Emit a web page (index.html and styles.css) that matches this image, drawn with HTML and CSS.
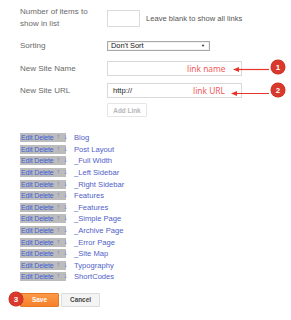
FILE: index.html
```html
<!DOCTYPE html>
<html>
<head>
<meta charset="utf-8">
<link rel="stylesheet" href="styles.css">
</head>
<body>
<div class="page">
  <div class="row r-num">
    <div class="label">Number of items to<br>show in list</div>
    <div class="field">
      <input class="num" type="text">
      <span class="hint">Leave blank to show all links</span>
    </div>
  </div>
  <div class="row r-sort">
    <div class="label">Sorting</div>
    <div class="field">
      <div class="select"><span>Don't Sort</span><span class="caret">&#9660;</span></div>
    </div>
  </div>
  <div class="row r-name">
    <div class="label">New Site Name</div>
    <div class="field"><div class="text-input"></div></div>
  </div>
  <div class="row r-url">
    <div class="label">New Site URL</div>
    <div class="field"><div class="text-input">http://</div></div>
  </div>
  <div class="row r-add">
    <div></div>
    <div class="field"><button class="add">Add Link</button></div>
  </div>

  <ul class="links">
    <li><span class="ctl">Edit Delete<i>↑</i><i>↓</i></span><span class="name">Blog</span></li>
    <li><span class="ctl">Edit Delete<i>↑</i><i>↓</i></span><span class="name">Post Layout</span></li>
    <li><span class="ctl">Edit Delete<i>↑</i><i>↓</i></span><span class="name">_Full Width</span></li>
    <li><span class="ctl">Edit Delete<i>↑</i><i>↓</i></span><span class="name">_Left Sidebar</span></li>
    <li><span class="ctl">Edit Delete<i>↑</i><i>↓</i></span><span class="name">_Right Sidebar</span></li>
    <li><span class="ctl">Edit Delete<i>↑</i><i>↓</i></span><span class="name">Features</span></li>
    <li><span class="ctl">Edit Delete<i>↑</i><i>↓</i></span><span class="name">_Features</span></li>
    <li><span class="ctl">Edit Delete<i>↑</i><i>↓</i></span><span class="name">_Simple Page</span></li>
    <li><span class="ctl">Edit Delete<i>↑</i><i>↓</i></span><span class="name">_Archive Page</span></li>
    <li><span class="ctl">Edit Delete<i>↑</i><i>↓</i></span><span class="name">_Error Page</span></li>
    <li><span class="ctl">Edit Delete<i>↑</i><i>↓</i></span><span class="name">_Site Map</span></li>
    <li><span class="ctl">Edit Delete<i>↑</i><i>↓</i></span><span class="name">Typography</span></li>
    <li><span class="ctl">Edit Delete<i>↑</i><i>↓</i></span><span class="name">ShortCodes</span></li>
  </ul>

  <div class="actions">
    <button class="save">Save</button>
    <button class="cancel">Cancel</button>
  </div>

  <span class="note note-name">link name</span>
  <span class="note note-url">link URL</span>
  <svg class="arrows" width="291" height="320" viewBox="0 0 291 320">
    <g stroke="#e8352b" stroke-width="1.2" fill="#e8352b">
      <line x1="237" y1="69.5" x2="269" y2="69.5"/>
      <polygon points="233,69.5 239,67 239,72" stroke="none"/>
      <line x1="235" y1="93.5" x2="269" y2="93.5"/>
      <polygon points="231,93.5 237,91 237,96" stroke="none"/>
    </g>
  </svg>
  <span class="badge b1">1</span>
  <span class="badge b2">2</span>
  <span class="badge b3">3</span>
</div>
</body>
</html>
```

FILE: styles.css
```css
html, body {
  margin: 0;
  padding: 0;
  background: #fff;
}
body {
  font-family: "Liberation Sans", Arial, sans-serif;
  font-size: 8px;
  color: #666;
}
.page {
  position: relative;
  width: 291px;
  height: 320px;
  padding-left: 20px;
  box-sizing: border-box;
}
.row {
  display: grid;
  grid-template-columns: 87px 1fr;
  align-items: center;
}
.label {
  line-height: 12px;
  color: #6a6a6a;
}
.field {
  display: flex;
  align-items: center;
}
.r-num {
  padding-top: 6px;
  align-items: start;
}
.r-num .field { padding-top: 4px; }
.num {
  width: 33px;
  height: 17px;
  box-sizing: border-box;
  border: 1px solid #dcdcdc;
  margin: 0;
  padding: 0;
  outline: none;
}
.hint {
  margin-left: 6px;
  font-size: 7.6px;
  color: #555;
}
.r-sort { margin-top: 10px; height: 12px; }
.select {
  width: 103px;
  height: 10px;
  box-sizing: border-box;
  border: 1px solid #a8a8a8;
  display: flex;
  align-items: center;
  justify-content: space-between;
  padding: 0 4px 0 3px;
  color: #111;
  font-size: 7.4px;
  line-height: 8px;
  box-shadow: inset 0 0 0 1px #f2f2f2;
}
.caret { font-size: 4px; color: #111; }
.r-name { margin-top: 9px; }
.r-url { margin-top: 7px; }
.text-input {
  width: 135px;
  height: 15px;
  box-sizing: border-box;
  border: 1px solid #d9d9d9;
  padding-left: 5px;
  display: flex;
  align-items: center;
  color: #222;
  font-size: 7.6px;
}
.r-add { margin-top: 5px; }
.add {
  width: 40px;
  height: 14px;
  border: 1px solid #e6e6e6;
  background: #fff;
  color: #b5b5b5;
  font-family: inherit;
  font-size: 6.4px;
  font-weight: bold;
  padding: 0;
  border-radius: 1px;
}
.links {
  list-style: none;
  margin: 15px 0 0;
  padding: 0;
}
.links li {
  height: 11.6px;
  display: flex;
  align-items: center;
}
.ctl {
  width: 46px;
  height: 9px;
  background: #bcbcbc;
  color: #3f5fd6;
  font-size: 7px;
  line-height: 9px;
  padding-left: 1px;
  box-sizing: border-box;
  white-space: nowrap;
  letter-spacing: -0.15px;
  display: flex;
  align-items: center;
}
.ctl i {
  font-style: normal;
  font-family: "DejaVu Sans", sans-serif;
  color: #7d8cc8;
  font-size: 5.5px;
  letter-spacing: 0;
  margin-left: 2.5px;
}
.name {
  margin-left: 8px;
  color: #5060c8;
  font-size: 7.6px;
}
.actions {
  margin-top: 10px;
  display: flex;
  gap: 2px;
}
.actions button {
  height: 14px;
  width: 39px;
  padding: 0;
  font-family: inherit;
  font-size: 6.4px;
  font-weight: bold;
  border-radius: 1px;
}
.save {
  background: linear-gradient(#fb9a47, #f6812a);
  border: 1px solid #e57a26;
  color: #fff;
}
.cancel {
  background: #f4f4f4;
  border: 1px solid #dcdcdc;
  color: #444;
}
.note {
  position: absolute;
  color: #f05a5a;
  font-family: "Noto Sans", sans-serif;
  font-size: 8.4px;
  line-height: 10px;
}
.note-name { left: 187px; top: 64px; }
.note-url { left: 193px; top: 86px; }
.arrows {
  position: absolute;
  left: 0;
  top: 0;
  pointer-events: none;
}
.badge {
  position: absolute;
  width: 14px;
  height: 14px;
  border-radius: 50%;
  background: #d8392c;
  color: #fff;
  font-family: "Liberation Sans", Arial, sans-serif;
  font-size: 8px;
  font-weight: bold;
  display: flex;
  align-items: center;
  justify-content: center;
  box-shadow: 0 0 0 0.5px #c22e22;
}
.b1 { left: 271px; top: 60px; }
.b2 { left: 271px; top: 83px; }
.b3 { left: 9px; top: 292px; }
```
